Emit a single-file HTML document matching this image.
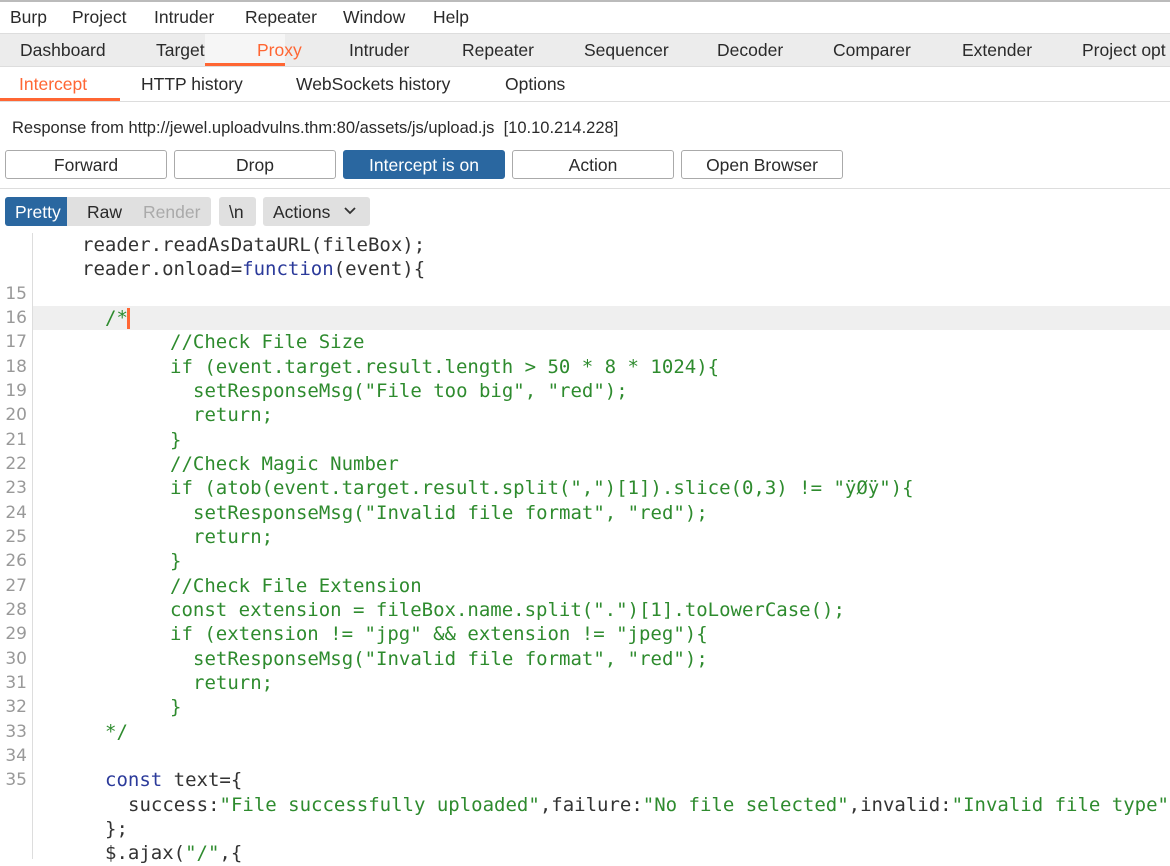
<!DOCTYPE html>
<html><head><meta charset="utf-8"><style>
body{margin:0;width:1170px;height:859px;overflow:hidden;background:#fff;font-family:"Liberation Sans","DejaVu Sans",sans-serif;position:relative;color:#2a2a2a}
.a{position:absolute;white-space:nowrap}
.t{font-size:17.5px}
.btn{position:absolute;top:150px;height:29px;border:1px solid #aaa;border-radius:3px;background:#fff;font-size:17.5px;text-align:center;line-height:29px;box-sizing:border-box}
.code{position:absolute;left:0;top:233px;font-family:"DejaVu Sans Mono","Liberation Mono",monospace;font-size:19px;}
.l{height:24.33px;line-height:24.33px;white-space:pre;position:relative}
.n{position:absolute;left:0;width:27px;text-align:right;color:#999;font-family:"DejaVu Sans",sans-serif;font-size:17px}
.g{color:#2e8b2e}.b{color:#2b3a9a}.k{color:#333}
</style></head><body>
<div class="a" style="left:0;top:0;width:1170px;height:33px;background:#fff;border-top:2px solid #bbb;box-sizing:border-box"></div>
<div class="a t" style="top:7px;left:10px">Burp</div>
<div class="a t" style="top:7px;left:72px">Project</div>
<div class="a t" style="top:7px;left:154px">Intruder</div>
<div class="a t" style="top:7px;left:245px">Repeater</div>
<div class="a t" style="top:7px;left:343px">Window</div>
<div class="a t" style="top:7px;left:433px">Help</div>
<div class="a" style="left:0;top:33px;width:1170px;height:34px;background:#ececec;border-top:1px solid #ddd;border-bottom:1px solid #ddd;box-sizing:border-box"></div>
<div class="a" style="left:205px;top:34px;width:80px;height:32px;background:#f6f6f6;border-bottom:3px solid #ff6633;box-sizing:border-box"></div>
<div class="a t" style="top:40px;left:20px">Dashboard</div>
<div class="a t" style="top:40px;left:156px">Target</div>
<div class="a t" style="top:40px;left:257px;color:#ff6633">Proxy</div>
<div class="a t" style="top:40px;left:349px">Intruder</div>
<div class="a t" style="top:40px;left:462px">Repeater</div>
<div class="a t" style="top:40px;left:584px">Sequencer</div>
<div class="a t" style="top:40px;left:717px">Decoder</div>
<div class="a t" style="top:40px;left:833px">Comparer</div>
<div class="a t" style="top:40px;left:962px">Extender</div>
<div class="a t" style="top:40px;left:1082px">Project opt</div>
<div class="a" style="left:0;top:67px;width:1170px;height:35px;border-bottom:1px solid #ddd;box-sizing:border-box"></div>
<div class="a" style="left:0;top:98px;width:120px;height:3px;background:#ff6633"></div>
<div class="a t" style="top:74px;left:19px;color:#ff6633">Intercept</div>
<div class="a t" style="top:74px;left:141px">HTTP history</div>
<div class="a t" style="top:74px;left:296px">WebSockets history</div>
<div class="a t" style="top:74px;left:505px">Options</div>
<div class="a" style="top:119px;left:12px;font-size:16.5px">Response from http://jewel.uploadvulns.thm:80/assets/js/upload.js &nbsp;[10.10.214.228]</div>
<div class="btn" style="left:5px;width:162px">Forward</div>
<div class="btn" style="left:174px;width:162px">Drop</div>
<div class="btn" style="left:343px;width:162px;background:#2a67a0;border-color:#2a67a0;color:#fff">Intercept is on</div>
<div class="btn" style="left:512px;width:162px">Action</div>
<div class="btn" style="left:681px;width:162px">Open Browser</div>
<div class="a" style="left:0;top:188px;width:1170px;height:1px;background:#ddd"></div>
<div class="a" style="left:5px;top:197px;width:206px;height:29px;background:#e0e0e0;border-radius:3px"></div>
<div class="a" style="left:5px;top:197px;width:62px;height:29px;background:#2a67a0;border-radius:3px 0 0 3px"></div>
<div class="a t" style="top:202px;left:15px;color:#fff">Pretty</div>
<div class="a t" style="top:202px;left:87px">Raw</div>
<div class="a t" style="top:202px;left:143px;color:#aaa">Render</div>
<div class="a" style="left:219px;top:197px;width:37px;height:29px;background:#e0e0e0;border-radius:3px"></div>
<div class="a t" style="top:202px;left:229px">\n</div>
<div class="a" style="left:263px;top:197px;width:107px;height:29px;background:#e0e0e0;border-radius:3px"></div>
<div class="a t" style="top:202px;left:273px">Actions</div>
<svg class="a" style="left:343px;top:206px" width="14" height="10"><path d="M2 2 L7 7 L12 2" fill="none" stroke="#333" stroke-width="1.8"/></svg>
<div class="a" style="left:32px;top:233px;width:1px;height:626px;background:#ddd"></div>
<div class="a" style="left:33px;top:306px;width:1137px;height:24px;background:#efefef"></div>
<div class="a" style="left:127px;top:308px;width:3px;height:21px;background:#ff6633"></div>
<div class="code">
<div class="l k" style="padding-left:82px">reader.readAsDataURL(fileBox);</div>
<div class="l k" style="padding-left:82px">reader.onload=<span class="b">function</span>(event){</div>
<div class="l"><span class="n">15</span></div>
<div class="l g" style="padding-left:105px"><span class="n">16</span>/*</div>
<div class="l g" style="padding-left:170px"><span class="n">17</span>//Check File Size</div>
<div class="l g" style="padding-left:170px"><span class="n">18</span>if (event.target.result.length &gt; 50 * 8 * 1024){</div>
<div class="l g" style="padding-left:193px"><span class="n">19</span>setResponseMsg("File too big", "red");</div>
<div class="l g" style="padding-left:193px"><span class="n">20</span>return;</div>
<div class="l g" style="padding-left:170px"><span class="n">21</span>}</div>
<div class="l g" style="padding-left:170px"><span class="n">22</span>//Check Magic Number</div>
<div class="l g" style="padding-left:170px"><span class="n">23</span>if (atob(event.target.result.split(",")[1]).slice(0,3) != "ÿØÿ"){</div>
<div class="l g" style="padding-left:193px"><span class="n">24</span>setResponseMsg("Invalid file format", "red");</div>
<div class="l g" style="padding-left:193px"><span class="n">25</span>return;</div>
<div class="l g" style="padding-left:170px"><span class="n">26</span>}</div>
<div class="l g" style="padding-left:170px"><span class="n">27</span>//Check File Extension</div>
<div class="l g" style="padding-left:170px"><span class="n">28</span>const extension = fileBox.name.split(".")[1].toLowerCase();</div>
<div class="l g" style="padding-left:170px"><span class="n">29</span>if (extension != "jpg" &amp;&amp; extension != "jpeg"){</div>
<div class="l g" style="padding-left:193px"><span class="n">30</span>setResponseMsg("Invalid file format", "red");</div>
<div class="l g" style="padding-left:193px"><span class="n">31</span>return;</div>
<div class="l g" style="padding-left:170px"><span class="n">32</span>}</div>
<div class="l g" style="padding-left:105px"><span class="n">33</span>*/</div>
<div class="l"><span class="n">34</span></div>
<div class="l k" style="padding-left:105px"><span class="n">35</span><span class="b">const</span> text={</div>
<div class="l k" style="padding-left:128px">success:<span class="g">"File successfully uploaded"</span>,failure:<span class="g">"No file selected"</span>,invalid:<span class="g">"Invalid file type"</span></div>
<div class="l k" style="padding-left:105px">};</div>
<div class="l k" style="padding-left:105px">$.ajax(<span class="g">"/"</span>,{</div>
</div>
</body></html>
